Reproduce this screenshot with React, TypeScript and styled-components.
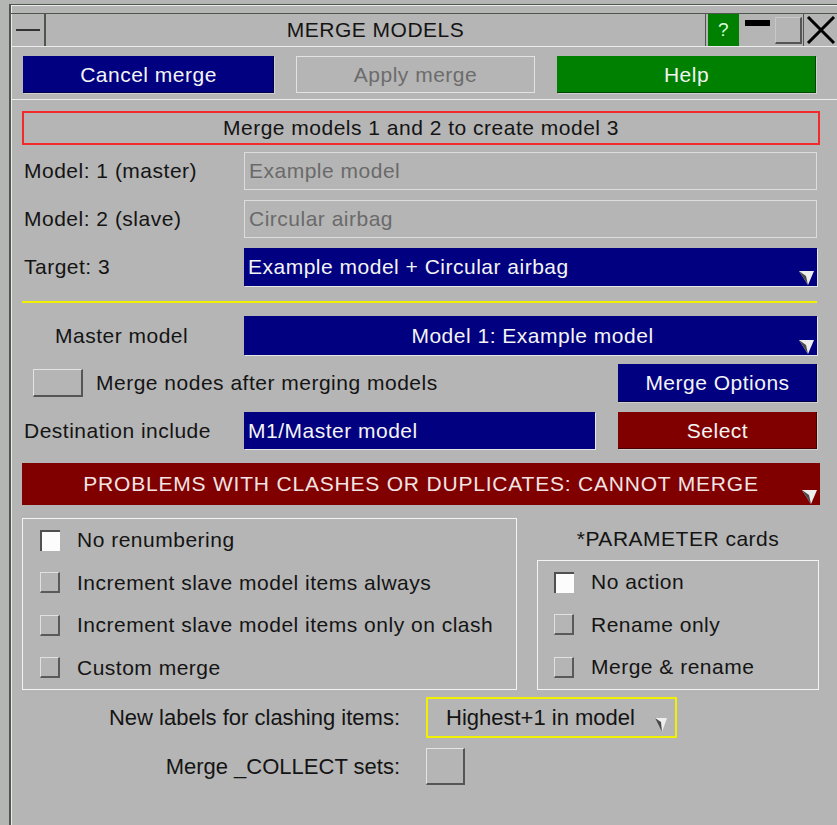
import styled, { createGlobalStyle } from "styled-components";

const GlobalStyle = createGlobalStyle`
  html, body {
    margin: 0;
    padding: 0;
    background: #b5b5b5;
  }
  body {
    font-family: "Liberation Sans", Arial, sans-serif;
    font-size: 21px;
    letter-spacing: 0.5px;
    color: #141414;
  }
`;

const DARK = "#4e564e";
const LIGHT = "#ececec";

const Window = styled.div`
  width: 837px;
  height: 825px;
  box-sizing: border-box;
  padding: 4px 0 0 9px;
  overflow: hidden;
`;

const Frame = styled.div`
  height: 100%;
  border-left: 2px solid ${DARK};
  border-top: 1px solid ${DARK};
  box-shadow: inset 1px 1px 0 ${LIGHT};
  display: flex;
  flex-direction: column;
`;

const TitleBar = styled.div`
  display: flex;
  height: 32px;
  margin-top: 8px;
  border-top: 1px solid ${DARK};
  border-bottom: 1px solid ${LIGHT};
`;

const SysBox = styled.div`
  width: 33px;
  border-right: 2px solid ${DARK};
  display: flex;
  align-items: center;
  justify-content: center;
  &::after {
    content: "";
    width: 24px;
    height: 2px;
    background: #333;
  }
`;

const Title = styled.div`
  flex: 1;
  text-align: center;
  line-height: 32px;
  border-right: 1px solid ${DARK};
  margin-right: 2px;
`;

const HelpBox = styled.div`
  width: 31px;
  background: #008000;
  color: #d8ffd8;
  text-align: center;
  line-height: 32px;
  font-size: 19px;
  margin-right: 3px;
`;

const MinBox = styled.div`
  width: 31px;
  display: flex;
  justify-content: center;
  padding-top: 6px;
  box-sizing: border-box;
  &::after {
    content: "";
    width: 25px;
    height: 6px;
    background: #000;
  }
`;

const MaxBox = styled.div`
  width: 30px;
  display: flex;
  align-items: center;
  justify-content: center;
  border-right: 1px solid ${DARK};
  &::after {
    content: "";
    width: 24px;
    height: 24px;
    border-top: 1px solid #c8c8c8;
    border-left: 1px solid #c8c8c8;
    border-right: 2px solid #555;
    border-bottom: 2px solid #555;
  }
`;

const CloseBox = styled.div`
  width: 33px;
  display: flex;
  align-items: center;
  justify-content: center;
`;

const TopSection = styled.div`
  padding: 9px 18px 0 12px;
`;

const ButtonRow = styled.div`
  display: flex;
  gap: 22px;
`;

const colors: Record<string, string> = {
  navy: "#000080",
  green: "#008000",
  red: "#800000",
};

const Button = styled.div<{ $variant: "navy" | "green" | "red" | "disabled"; $w: number; $h?: number }>`
  width: ${(p) => p.$w}px;
  height: ${(p) => p.$h ?? 37}px;
  box-sizing: border-box;
  display: flex;
  align-items: center;
  justify-content: center;
  flex-shrink: 0;
  background: ${(p) => (p.$variant === "disabled" ? "transparent" : colors[p.$variant])};
  color: ${(p) => (p.$variant === "disabled" ? "#6c6c6c" : "#f4f4f4")};
  border: ${(p) => (p.$variant === "disabled" ? "1px solid #e2e2e2" : "none")};
  box-shadow: ${(p) =>
    p.$variant === "disabled" ? "none" : "inset -1px -1px 0 rgba(0,0,0,0.45), 1px 1px 0 #d0d0d0"};
`;

const Separator = styled.div`
  height: 1px;
  background: ${LIGHT};
  margin-top: 6px;
`;

const Body = styled.div`
  padding: 11px 20px 0 11px;
  display: flex;
  flex-direction: column;
`;

const InfoBox = styled.div`
  height: 34px;
  box-sizing: border-box;
  border: 2px solid #f22a2a;
  margin-right: -3px;
  text-align: center;
  line-height: 30px;
`;

const FormGrid = styled.div`
  display: grid;
  grid-template-columns: 222px 1fr;
  row-gap: 10px;
  align-items: center;
  margin-top: 7px;
`;

const Label = styled.div<{ $indent?: number }>`
  padding-left: ${(p) => 2 + (p.$indent ?? 0)}px;
  white-space: nowrap;
`;

const Field = styled.div<{ $active?: boolean; $center?: boolean; $h?: number }>`
  position: relative;
  height: ${(p) => p.$h ?? 38}px;
  box-sizing: border-box;
  display: flex;
  align-items: center;
  justify-content: ${(p) => (p.$center ? "center" : "flex-start")};
  padding-left: 4px;
  white-space: nowrap;
  background: ${(p) => (p.$active ? "#000080" : "transparent")};
  color: ${(p) => (p.$active ? "#f4f4f4" : "#6a6a6a")};
  border: ${(p) => (p.$active ? "none" : "1px solid #dcdcdc")};
  box-shadow: ${(p) => (p.$active ? "1px 1px 0 #e6e6e6" : "none")};
`;

const ArrowWrap = styled.span`
  position: absolute;
  right: 3px;
  bottom: 1px;
  display: flex;
`;

function Arrow() {
  return (
    <ArrowWrap>
      <svg width="15" height="17" viewBox="0 0 15 17">
        <polygon points="0,3 15,3 9,17" fill="#eeeeee" />
        <polygon points="0,3 9,17 7,8" fill="#4a4a4a" />
      </svg>
    </ArrowWrap>
  );
}

const YellowLine = styled.div`
  height: 2px;
  background: #f0f000;
  margin-top: 15px;
`;

const MasterGrid = styled(FormGrid)`
  margin-top: 13px;
`;

const Row = styled.div<{ $mt: number; $h: number }>`
  display: flex;
  align-items: center;
  height: ${(p) => p.$h}px;
  margin-top: ${(p) => p.$mt}px;
`;

const Toggle = styled.div<{ $w: number; $h: number; $ml?: number }>`
  width: ${(p) => p.$w}px;
  height: ${(p) => p.$h}px;
  margin-left: ${(p) => p.$ml ?? 0}px;
  box-sizing: border-box;
  flex-shrink: 0;
  border-top: 1px solid #e4e4e4;
  border-left: 1px solid #e4e4e4;
  border-right: 2px solid #555;
  border-bottom: 2px solid #555;
`;

const ToggleText = styled.span`
  margin-left: 13px;
  flex: 1;
  white-space: nowrap;
`;

const DestLabel = styled.div`
  width: 222px;
  padding-left: 2px;
  box-sizing: border-box;
`;

const DestField = styled(Field)`
  width: 351px;
  flex-shrink: 0;
`;

const Spacer = styled.div`
  flex: 1;
`;

const ProblemBar = styled.div`
  position: relative;
  height: 42px;
  margin-top: 14px;
  margin-right: -3px;
  background: #800000;
  color: #f2e4e4;
  letter-spacing: 0.8px;
  display: flex;
  align-items: center;
  justify-content: center;
`;

const Options = styled.div`
  display: flex;
  gap: 20px;
  margin-top: 13px;
`;

const GroupBox = styled.div<{ $w: number; $h: number; $pl: number }>`
  width: ${(p) => p.$w}px;
  height: ${(p) => p.$h}px;
  box-sizing: border-box;
  border: 1px solid #f4f4f4;
  padding-left: ${(p) => p.$pl}px;
  display: grid;
  grid-auto-rows: 42.5px;
  align-content: start;
  flex-shrink: 0;
`;

const RightCol = styled.div`
  display: flex;
  flex-direction: column;
`;

const ColTitle = styled.div`
  height: 42px;
  line-height: 42px;
  text-align: center;
`;

const OptionRow = styled.div`
  display: flex;
  align-items: center;
`;

const Check = styled.span<{ $on?: boolean }>`
  width: 20px;
  height: 21px;
  box-sizing: border-box;
  flex-shrink: 0;
  margin-right: 17px;
  background: ${(p) => (p.$on ? "#fcfcfc" : "transparent")};
  border-top: ${(p) => (p.$on ? "2px solid #505050" : "1px solid #e0e0e0")};
  border-left: ${(p) => (p.$on ? "2px solid #505050" : "1px solid #e0e0e0")};
  border-right: ${(p) => (p.$on ? "none" : "2px solid #5a5a5a")};
  border-bottom: ${(p) => (p.$on ? "none" : "2px solid #5a5a5a")};
`;

const BottomGrid = styled.div`
  display: grid;
  grid-template-columns: 378px auto;
  column-gap: 26px;
  row-gap: 10px;
  align-items: center;
  justify-content: start;
  margin-top: 7px;
`;

const BottomLabel = styled.div`
  text-align: right;
  font-size: 22px;
  letter-spacing: 0;
`;

const LabelSelect = styled.div`
  position: relative;
  width: 251px;
  height: 41px;
  box-sizing: border-box;
  border: 2px solid #f0f000;
  display: flex;
  align-items: center;
  padding-left: 18px;
  font-size: 22px;
  letter-spacing: 0;
`;

const SelectArrow = styled.span`
  position: absolute;
  right: 8px;
  top: 17px;
  display: flex;
`;

const SmallArrow = () => (
  <SelectArrow>
    <svg width="12" height="16" viewBox="0 0 12 16">
      <polygon points="0,2 12,2 7,16" fill="#eeeeee" />
      <polygon points="0,2 7,16 6,6" fill="#4a4a4a" />
    </svg>
  </SelectArrow>
);

const leftOptions = [
  { label: "No renumbering", on: true },
  { label: "Increment slave model items always" },
  { label: "Increment slave model items only on clash" },
  { label: "Custom merge" },
];

const paramOptions = [
  { label: "No action", on: true },
  { label: "Rename only" },
  { label: "Merge & rename" },
];

export default function App() {
  return (
    <Window>
      <GlobalStyle />
      <Frame>
        <TitleBar>
          <SysBox />
          <Title>MERGE MODELS</Title>
          <HelpBox>?</HelpBox>
          <MinBox />
          <MaxBox />
          <CloseBox>
            <svg width="30" height="28" viewBox="0 0 30 28">
              <path d="M2 1 L28 27 M28 1 L2 27" stroke="#000" strokeWidth="3" />
            </svg>
          </CloseBox>
        </TitleBar>

        <TopSection>
          <ButtonRow>
            <Button $variant="navy" $w={251}>Cancel merge</Button>
            <Button $variant="disabled" $w={239}>Apply merge</Button>
            <Button $variant="green" $w={259}>Help</Button>
          </ButtonRow>
        </TopSection>
        <Separator />

        <Body>
          <InfoBox>Merge models 1 and 2 to create model 3</InfoBox>

          <FormGrid>
            <Label>Model: 1 (master)</Label>
            <Field>Example model</Field>
            <Label>Model: 2 (slave)</Label>
            <Field>Circular airbag</Field>
            <Label>Target: 3</Label>
            <Field $active>
              Example model + Circular airbag
              <Arrow />
            </Field>
          </FormGrid>

          <YellowLine />

          <MasterGrid>
            <Label $indent={31}>Master model</Label>
            <Field $active $center $h={39}>
              Model 1: Example model
              <Arrow />
            </Field>
          </MasterGrid>

          <Row $mt={9} $h={38}>
            <Toggle $w={50} $h={28} $ml={11} />
            <ToggleText>Merge nodes after merging models</ToggleText>
            <Button $variant="navy" $w={199} $h={38}>Merge Options</Button>
          </Row>

          <Row $mt={10} $h={37}>
            <DestLabel>Destination include</DestLabel>
            <DestField $active $h={37}>M1/Master model</DestField>
            <Spacer />
            <Button $variant="red" $w={199}>Select</Button>
          </Row>

          <ProblemBar>
            PROBLEMS WITH CLASHES OR DUPLICATES: CANNOT MERGE
            <Arrow />
          </ProblemBar>

          <Options>
            <GroupBox $w={495} $h={172} $pl={17}>
              {leftOptions.map((o) => (
                <OptionRow key={o.label}>
                  <Check $on={o.on} />
                  {o.label}
                </OptionRow>
              ))}
            </GroupBox>
            <RightCol>
              <ColTitle>*PARAMETER cards</ColTitle>
              <GroupBox $w={282} $h={130} $pl={16}>
                {paramOptions.map((o) => (
                  <OptionRow key={o.label}>
                    <Check $on={o.on} />
                    {o.label}
                  </OptionRow>
                ))}
              </GroupBox>
            </RightCol>
          </Options>

          <BottomGrid>
            <BottomLabel>New labels for clashing items:</BottomLabel>
            <LabelSelect>
              Highest+1 in model
              <SmallArrow />
            </LabelSelect>
            <BottomLabel>Merge _COLLECT sets:</BottomLabel>
            <Toggle $w={39} $h={37} />
          </BottomGrid>
        </Body>
      </Frame>
    </Window>
  );
}
